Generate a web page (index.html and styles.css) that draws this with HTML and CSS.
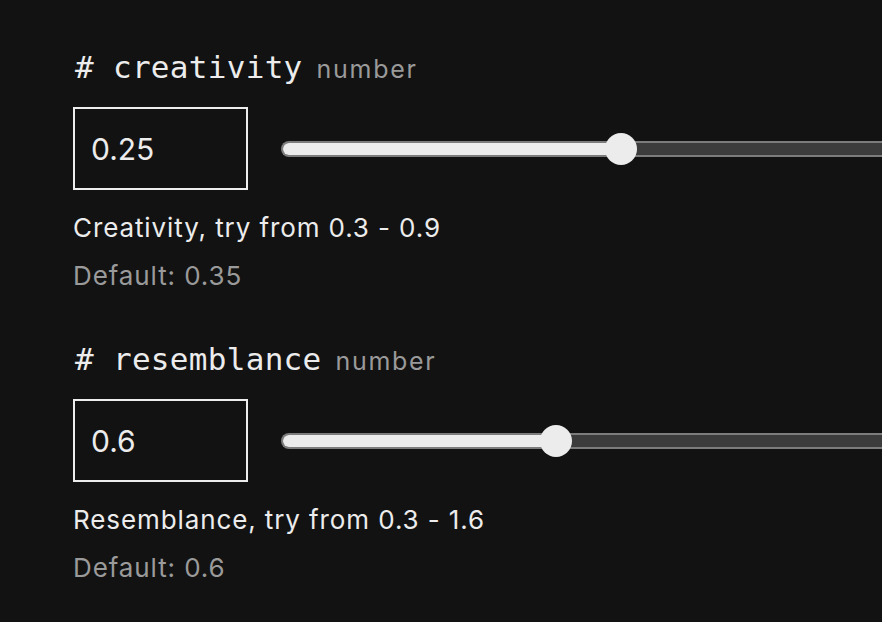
FILE: index.html
```html
<!DOCTYPE html>
<html>
<head>
<meta charset="utf-8">
<link rel="stylesheet" href="styles.css">
</head>
<body>
<main class="params">
  <section class="param">
    <div class="param-head">
      <span class="param-name"># creativity</span>
      <span class="param-type">number</span>
    </div>
    <div class="param-controls">
      <div class="num-box">0.25</div>
      <div class="slider">
        <div class="slider-fill" style="width: 340px"></div>
        <div class="slider-thumb" style="left: 338px"></div>
      </div>
    </div>
    <p class="param-desc">Creativity, try from 0.3 - 0.9</p>
    <p class="param-default">Default: 0.35</p>
  </section>
  <section class="param">
    <div class="param-head">
      <span class="param-name"># resemblance</span>
      <span class="param-type">number</span>
    </div>
    <div class="param-controls">
      <div class="num-box">0.6</div>
      <div class="slider">
        <div class="slider-fill" style="width: 275px"></div>
        <div class="slider-thumb" style="left: 273px"></div>
      </div>
    </div>
    <p class="param-desc">Resemblance, try from 0.3 - 1.6</p>
    <p class="param-default">Default: 0.6</p>
  </section>
</main>
</body>
</html>
```
FILE: styles.css
```css
html, body {
  margin: 0;
  padding: 0;
  background: #121212;
  overflow: hidden;
}
body {
  width: 882px;
  height: 622px;
  font-family: Inter, "Noto Sans", sans-serif;
  color: #e8e8e8;
}
.params {
  box-sizing: border-box;
  width: 882px;
  padding: 47px 0 0 73px;
  display: flex;
  flex-direction: column;
  gap: 45px;
  overflow: hidden;
}
.param {
  display: flex;
  flex-direction: column;
}
.param-head {
  display: flex;
  align-items: baseline;
  height: 40px;
  line-height: 40px;
}
.param-name {
  font-family: "DejaVu Sans Mono", "Liberation Mono", monospace;
  font-size: 31px;
  letter-spacing: 0.3px;
  color: #ececec;
  margin-left: 2px;
}
.param-type {
  font-size: 25px;
  letter-spacing: 1.7px;
  color: #9a9a9a;
  margin-left: 14px;
}
.param-controls {
  margin-top: 20px;
  display: flex;
  align-items: center;
  gap: 33px;
}
.num-box {
  box-sizing: border-box;
  width: 175px;
  height: 83px;
  border: 2px solid #ededed;
  padding-left: 16px;
  display: flex;
  align-items: center;
  font-size: 30px;
  color: #ececec;
  flex: none;
}
.slider {
  position: relative;
  flex: 1 1 auto;
  height: 16px;
  box-sizing: border-box;
  border: 2px solid #7c7c7c;
  border-right: none;
  border-radius: 8px 0 0 8px;
  background: #3c3c3c;
}
.slider-fill {
  height: 100%;
  background: #ececec;
  border-radius: 6px 0 0 6px;
}
.slider-thumb {
  position: absolute;
  top: 50%;
  width: 32px;
  height: 32px;
  margin: -16px 0 0 -16px;
  border-radius: 50%;
  background: #ececec;
}
.param-desc, .param-default {
  margin: 0;
  font-size: 26px;
  line-height: 36px;
  letter-spacing: 0.9px;
}
.param-desc {
  margin-top: 20px;
  color: #ececec;
}
.param-default {
  margin-top: 12px;
  color: #9a9a9a;
}
```
